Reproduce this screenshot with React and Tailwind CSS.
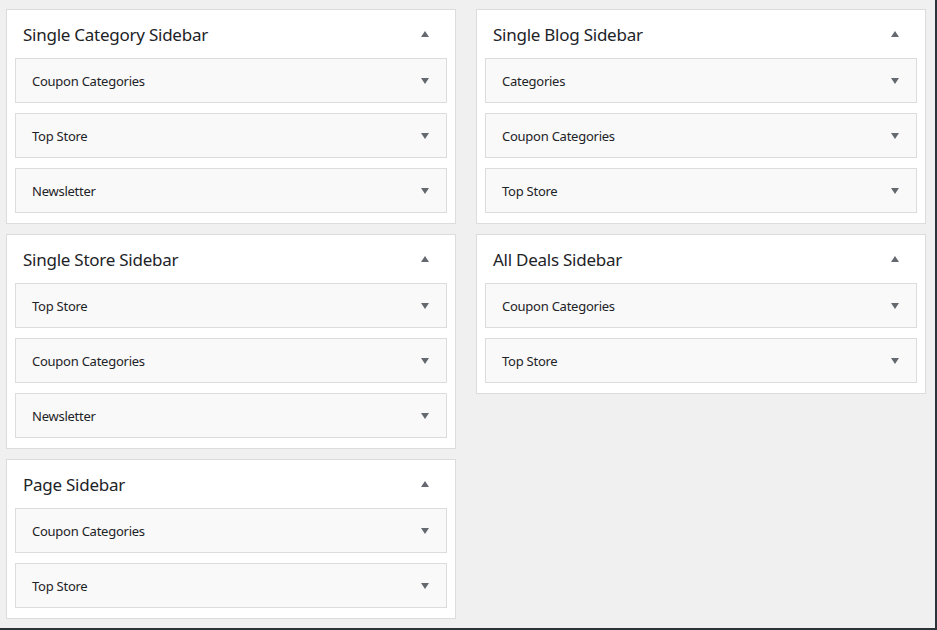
import React from "react";

const sidebars = [
  [
    { title: "Single Category Sidebar", widgets: ["Coupon Categories", "Top Store", "Newsletter"] },
    { title: "Single Store Sidebar", widgets: ["Top Store", "Coupon Categories", "Newsletter"] },
    { title: "Page Sidebar", widgets: ["Coupon Categories", "Top Store"] },
  ],
  [
    { title: "Single Blog Sidebar", widgets: ["Categories", "Coupon Categories", "Top Store"] },
    { title: "All Deals Sidebar", widgets: ["Coupon Categories", "Top Store"] },
  ],
];

function Arrow({ up }) {
  return (
    <svg width="8" height="6" viewBox="0 0 8 6" className="shrink-0">
      {up ? <polygon points="0,6 8,6 4,0" fill="#646970" /> : <polygon points="0,0 8,0 4,6" fill="#646970" />}
    </svg>
  );
}

function Sidebar({ title, widgets }) {
  return (
    <div className="bg-white border border-[#dcdcde] pb-[10px]">
      <div className="h-[48px] flex items-center justify-between pl-[16px] pr-[26px]">
        <h2 className="text-[17px] tracking-[-0.25px] text-[#1d2327] leading-none pt-[1px]">{title}</h2>
        <Arrow up />
      </div>
      <div className="flex flex-col gap-[10px] mx-[8px]">
        {widgets.map((w) => (
          <div
            key={w}
            className="h-[45px] bg-[#f9f9f9] border border-[#dcdcde] flex items-center justify-between pl-[16px] pr-[17px]"
          >
            <span className="text-[13px] tracking-[-0.25px] text-[#1d2327] pt-[2px]">{w}</span>
            <Arrow />
          </div>
        ))}
      </div>
    </div>
  );
}

export default function App() {
  return (
    <div
      className="w-[937px] h-[630px] bg-[#f0f0f1] border-r-2 border-b-2 border-[#2c3338] overflow-hidden pl-[6px] pt-[9px]"
      style={{ fontFamily: "'Noto Sans', sans-serif" }}
    >
      <div className="flex gap-[20px] items-start">
        {sidebars.map((col, i) => (
          <div key={i} className="w-[450px] flex flex-col gap-[10px]">
            {col.map((s) => (
              <Sidebar key={s.title} {...s} />
            ))}
          </div>
        ))}
      </div>
    </div>
  );
}
